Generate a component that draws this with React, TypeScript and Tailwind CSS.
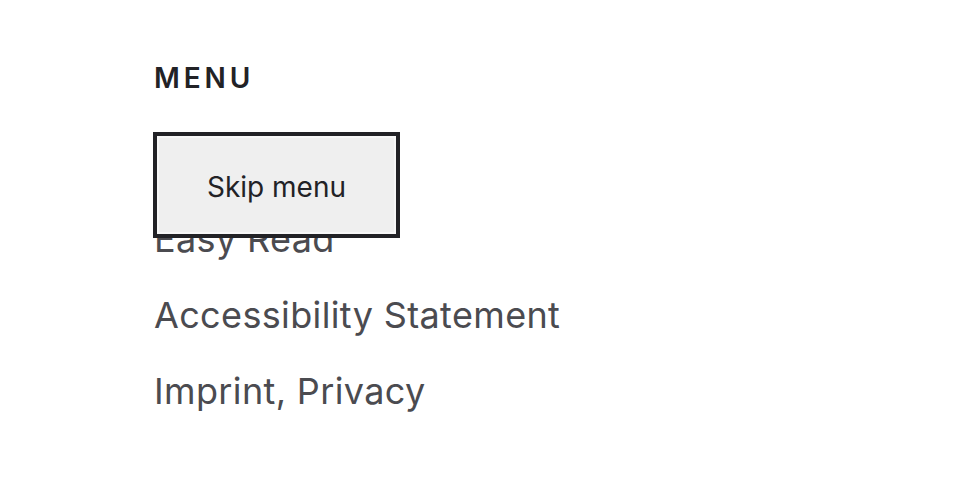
export default function App() {
  const items = ['Easy Read', 'Accessibility Statement', 'Imprint, Privacy']

  return (
    <div className="relative min-h-[488px] w-[976px] bg-white pl-[154px] pt-[60px] font-['Inter','Noto_Sans',sans-serif]">
      <h2 className="text-[28px] leading-[36px] font-semibold tracking-[0.14em] text-[#222226]">MENU</h2>

      <ul className="mt-[105px]">
        {items.map((item) => (
          <li key={item} className="text-[36px] leading-[76px] tracking-[0.01em] text-[#4b4b50]">
            <a href="#">{item}</a>
          </li>
        ))}
      </ul>

      <a
        href="#"
        className="absolute left-[153px] top-[132px] flex h-[106px] w-[247px] items-center justify-center border-[4px] border-[#222226] bg-[#efefef] pt-[4px] text-[28px] text-[#222226] shadow-[inset_0_0_0_2px_#f7f7f7]"
      >
        Skip menu
      </a>
    </div>
  )
}
